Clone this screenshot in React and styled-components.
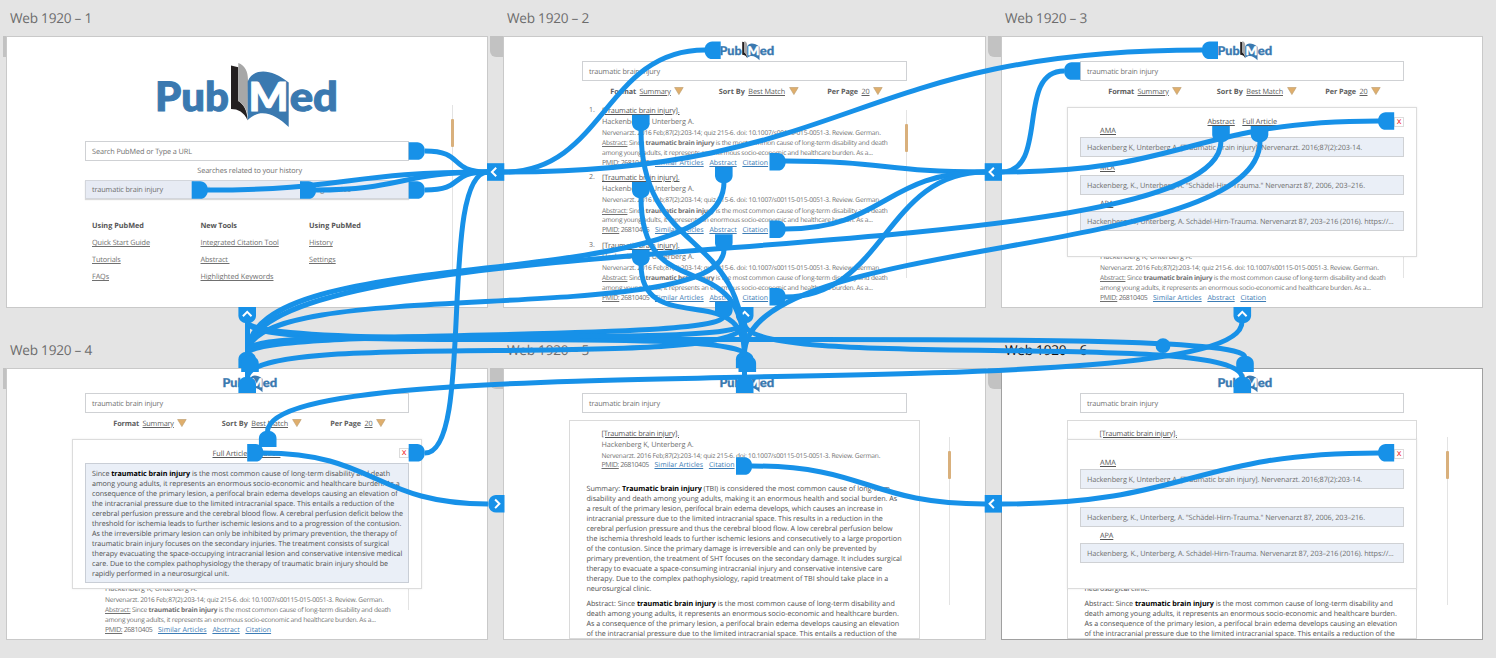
import React, { useLayoutEffect, useRef, useState } from "react";
import styled, { createGlobalStyle, css } from "styled-components";

const BLUE = "#1791e8";

const GlobalStyle = createGlobalStyle`
  * { box-sizing: border-box; }
  body {
    margin: 0;
    background: #e4e4e4;
    font-family: "Open Sans", "Noto Sans", sans-serif;
    text-rendering: geometricPrecision;
    overflow: hidden;
  }
`;

const Canvas = styled.main`
  position: relative;
  width: 1496px;
  height: 658px;
  overflow: hidden;
  background: #e4e4e4;
`;

const Frame = styled.section`
  position: absolute;
  left: ${(p) => p.$x}px;
  top: ${(p) => p.$y}px;
  width: ${(p) => p.$w || 482}px;
`;

const FrameLabel = styled.h2`
  margin: 0 0 0 4px;
  height: 36px;
  padding-top: 8px;
  font-size: 13.6px;
  font-weight: 400;
  line-height: 20px;
  color: ${(p) => (p.$active ? "#111" : "#6c6c6c")};
`;

const Grip = styled.span`
  position: absolute;
  left: -13px;
  top: 36px;
  width: 13px;
  height: 21px;
  border-radius: 0 0 0 6px;
  background: #c2c2c2;
`;

const Artboard = styled.div`
  position: relative;
  height: 272px;
  overflow: hidden;
  background: #fff;
  box-shadow: inset 0 0 0 1px ${(p) => (p.$active ? "#a0a0a0" : "#c9c9c9")};
`;

const Span = styled.span`
  display: inline-block;
  flex: none;
  white-space: pre;
  ${(p) => p.$bold && css`font-weight: 700;`}
  ${(p) => p.$under && css`
    text-decoration: underline;
    text-decoration-thickness: 0.6px;
    text-underline-offset: 1px;
  `}
  ${(p) => p.$color && css`color: ${p.$color};`}
`;

// Tracks a run of text so that it takes exactly the given width.
function Fit({ w, bold, under, color, children }) {
  const ref = useRef(null);
  const [tracking, setTracking] = useState(0);
  useLayoutEffect(() => {
    const el = ref.current;
    el.style.letterSpacing = "0px";
    const natural = el.getBoundingClientRect().width;
    setTracking((w - natural) / el.textContent.length);
  }, [w]);
  return (
    <Span ref={ref} $bold={bold} $under={under} $color={color} style={{ letterSpacing: `${tracking}px` }}>
      {children}
    </Span>
  );
}

const Line = styled.div`
  display: flex;
  align-items: center;
  height: ${(p) => p.$h}px;
  line-height: ${(p) => p.$h}px;
  font-size: ${(p) => p.$size || 7.3}px;
  color: ${(p) => p.$color || "#707070"};
  gap: ${(p) => p.$gap || 0}px;
`;

const LogoRow = styled.div`
  height: ${(p) => (p.$large ? 105 : 25)}px;
  padding: ${(p) => (p.$large ? "26.5px 0 0 151px" : "5px 0 0 217px")};
  svg { display: block; overflow: visible; }
`;

function Logo({ width }) {
  const word = {
    fontFamily: "Lato, sans-serif",
    fontWeight: 900,
    lengthAdjust: "spacingAndGlyphs",
  };
  return (
    <svg width={width} height={(width * 64) / 180} viewBox="0 0 180 64">
      <path d="M74 2.5 L81.3 4.2 L81.3 38 C86 41 90 46 90.7 57.5 C87 49 81 46 74 46 Z" fill="#231f20" />
      <path d="M81.3 0 C88 2.5 91 8 91 17.5 L90.7 52 C89 45 86 41 81.3 38 Z" fill="#a7a7a7" />
      <path d="M90.7 18.5 C96 5 114 5 131.7 19.5 L131.7 64 C119 52 104 44 90.7 57 Z" fill="#3a79b0" />
      <text {...word} x="-2" y="48" fontSize="40.5" textLength="74" fill="#3a79b0" stroke="#3a79b0" strokeWidth="1">Pub</text>
      <text {...word} x="91.5" y="48" fontSize="40" textLength="40" fill="#fff" stroke="#fff" strokeWidth="1">M</text>
      <text {...word} x="132.7" y="48" fontSize="40.5" textLength="48.4" fill="#3a79b0" stroke="#3a79b0" strokeWidth="1">ed</text>
    </svg>
  );
}

const Field = styled.div`
  display: flex;
  align-items: center;
  width: ${(p) => (p.$wide ? 325 : 324)}px;
  height: 20px;
  margin-left: ${(p) => p.$ml ?? 79}px;
  padding: 1.4px 0 0 6px;
  border: 1px solid #cfd1d4;
  background: ${(p) => (p.$filled ? "#eaeff7" : "#fff")};
  font-size: 7.3px;
  line-height: 10px;
  color: #707070;
`;

const FilterRow = styled.div`
  display: flex;
  height: 20px;
  padding-left: 107.3px;
`;

const Filter = styled.div`
  display: flex;
  align-items: center;
  gap: 3.5px;
  width: 108.5px;
  font-size: 7.3px;
  line-height: 10px;
  color: #606060;
  span { padding-top: 1.4px; }
`;

function Caret() {
  return (
    <svg width="10" height="8" viewBox="0 0 10 8">
      <path d="M0.6 0.5H9.2L4.9 7.6Z" fill="#dfae6c" stroke="#b99a6c" strokeWidth="0.6" />
    </svg>
  );
}

function Filters() {
  return (
    <FilterRow>
      <Filter><Fit w={25.7} bold>Format</Fit><Fit w={31.3} under>Summary</Fit><Caret /></Filter>
      <Filter><Fit w={26} bold>Sort By</Fit><Fit w={36.7} under>Best Match</Fit><Caret /></Filter>
      <Filter><Fit w={30.7} bold>Per Page</Fit><Fit w={8} under>20</Fit><Caret /></Filter>
    </FilterRow>
  );
}

function Header({ wide }) {
  return (
    <>
      <LogoRow><Logo width={54} /></LogoRow>
      <Field $wide={wide}><Fit w={71}>traumatic brain injury</Fit></Field>
    </>
  );
}

const Results = styled.div`
  padding: 4.6px 0 0 86px;
`;

const Result = styled.article`
  display: flex;
  height: 67.5px;
`;

const Rank = styled.div`
  width: 13px;
  font-size: 7px;
  line-height: 10px;
  color: #707070;
`;

const LINK = "#3c7cb5";
const Title = () => <Line $h={10} $color="#555"><Fit w={77.5} under>[Traumatic brain injury].</Fit></Line>;
const Authors = () => <Line $h={12.4}><Fit w={92}>Hackenberg K, Unterberg A.</Fit></Line>;
const Journal = () => (
  <Line $h={10.4} $size={6.6}>
    <Fit w={278.7}>Nervenarzt. 2016 Feb;87(2):203-14; quiz 215-6. doi: 10.1007/s00115-015-0051-3. Review. German.</Fit>
  </Line>
);
const Pmid = () => <Fit w={47.3}><Span $under>PMID:</Span> 26810405</Fit>;

function ResultItem({ rank }) {
  return (
    <Result>
      <Rank>{rank}.</Rank>
      <div>
        <Title />
        <Authors />
        <Journal />
        <Line $h={9.2} $size={6.6}>
          <Fit w={285.7}><Span $under>Abstract:</Span> Since <b>traumatic brain injury</b> is the most common cause of long-term disability and death</Fit>
        </Line>
        <Line $h={9} $size={6.6}>
          <Fit w={270.7}>among young adults, it represents an enormous socio-economic and healthcare burden. As a...</Fit>
        </Line>
        <Line $h={13} $gap={5.7} $size={7}>
          <Pmid />
          <Fit w={48.7} under color={LINK}>Similar Articles</Fit>
          <Fit w={27.3} under color={LINK}>Abstract</Fit>
          <Fit w={25.7} under color={LINK}>Citation</Fit>
        </Line>
      </div>
    </Result>
  );
}

function ResultList() {
  return (
    <Results>
      <ResultItem rank={1} />
      <ResultItem rank={2} />
      <ResultItem rank={3} />
    </Results>
  );
}

const Track = styled.div`
  position: absolute;
  left: ${(p) => p.$x}px;
  top: ${(p) => p.$y}px;
  width: 3px;
  height: 168px;
  padding-top: 14px;
  background: linear-gradient(90deg, transparent 1px, #e3e3e3 1px, #e3e3e3 2px, transparent 2px);
`;

const Thumb = styled.div`
  width: 3px;
  height: 28px;
  border-radius: 1px;
  background: #d9b07c;
`;

const Scrollbar = ({ x, y }) => <Track $x={x} $y={y}><Thumb /></Track>;

const Modal = styled.div`
  position: absolute;
  left: 66px;
  top: ${(p) => p.$top}px;
  width: 350px;
  height: 150px;
  border: 1px solid #dcdcdc;
  box-shadow: 0 0 2px rgba(0, 0, 0, 0.08);
  background: #fff;
`;

const CloseButton = styled.span`
  position: absolute;
  right: 12px;
  top: 8.5px;
  width: 10px;
  height: 10px;
  border: 1px solid #dcdcdc;
  font-size: 9px;
  line-height: 6px;
  text-align: center;
  color: #f01820;
`;

const ModalNav = styled.div`
  height: 18px;
  padding: ${(p) => p.$pad};
`;

const Heading = styled.div`
  height: ${(p) => p.$h}px;
  padding: ${(p) => p.$pt}px 0 0 32px;
`;

const StyleName = ({ h, pt, w, children }) => (
  <Heading $h={h} $pt={pt}>
    {children && <Line $h={10} $color="#555"><Fit w={w} under>{children}</Fit></Line>}
  </Heading>
);

function CitationModal({ top, nav, mla, apaPt }) {
  return (
    <Modal $top={top}>
      <CloseButton>x</CloseButton>
      <ModalNav $pad="8.6px 0 0 139.5px">
        {nav && (
          <Line $h={10} $gap={7.5} $color="#555">
            <Fit w={27.3} under>Abstract</Fit>
            <Fit w={34.7} under>Full Article</Fit>
          </Line>
        )}
      </ModalNav>
      <StyleName h={11} pt={0} w={16}>AMA</StyleName>
      <Field $filled $ml={12}><Fit w={275}>Hackenberg K, Unterberg A. [Traumatic brain injury]. Nervenarzt. 2016;87(2):203-14.</Fit></Field>
      <StyleName h={18} pt={5.6} w={15}>{mla}</StyleName>
      <Field $filled $ml={12}><Fit w={278}>Hackenberg, K., Unterberg, A. "Schädel-Hirn-Trauma." Nervenarzt 87, 2006, 203–216.</Fit></Field>
      <StyleName h={16} pt={apaPt} w={13.3}>APA</StyleName>
      <Field $filled $ml={12}><Fit w={306.7}>Hackenberg, K., Unterberg, A. Schädel-Hirn-Trauma. Nervenarzt 87, 203–216 (2016). https://...</Fit></Field>
    </Modal>
  );
}

const AbstractBox = styled.div`
  width: 324px;
  height: 120px;
  margin: 5.4px 0 0 12px;
  padding: 5.1px 0 0 6px;
  border: 1px solid #c9ced6;
  background: #eaeff7;
  b { color: #000; }
`;

const Paragraph = styled.div`
  margin-bottom: ${(p) => p.$mb || 0}px;
  b { color: #000; }
`;

const Lines = ({ rows }) =>
  rows.map(([w, text], i) => (
    <Line key={i} $h={10} $size={7.2} $color="#505050"><Fit w={w}>{text}</Fit></Line>
  ));

const TBI = <b>traumatic brain injury</b>;

const ABSTRACT = [
  [298, <>Since {TBI} is the most common cause of long-term disability and death</>],
  [307.7, "among young adults, it represents an enormous socio-economic and healthcare burden. As a"],
  [305.7, "consequence of the primary lesion, a perifocal brain edema develops causing an elevation of"],
  [302.3, "the intracranial pressure due to the limited intracranial space. This entails a reduction of the"],
  [311, "cerebral perfusion pressure and the cerebral blood flow. A cerebral perfusion deficit below the"],
  [309.3, "threshold for ischemia leads to further ischemic lesions and to a progression of the contusion."],
  [305, "As the irreversible primary lesion can only be inhibited by primary prevention, the therapy of"],
  [297, "traumatic brain injury focuses on the secondary injuries. The treatment consists of surgical"],
  [310.3, "therapy evacuating the space-occupying intracranial lesion and conservative intensive medical"],
  [296, "care. Due to the complex pathophysiology the therapy of traumatic brain injury should be"],
  [137, "rapidly performed in a neurosurgical unit."],
];

const SUMMARY = [
  [303.3, <>Summary: <b>Traumatic brain injury</b> (TBI) is considered the most common cause of long-term</>],
  [310.7, "disability and death among young adults, making it an enormous health and social burden. As"],
  [296, "a result of the primary lesion, perifocal brain edema develops, which causes an increase in"],
  [296.3, "intracranial pressure due to the limited intracranial space. This results in a reduction in the"],
  [306, "cerebral perfusion pressure and thus the cerebral blood flow. A low cerebral perfusion below"],
  [315, "the ischemia threshold leads to further ischemic lesions and consecutively to a large proportion"],
  [289.7, "of the contusion. Since the primary damage is irreversible and can only be prevented by"],
  [315.3, "primary prevention, the treatment of SHT focuses on the secondary damage. It includes surgical"],
  [295.7, "therapy to evacuate a space-consuming intracranial injury and conservative intensive care"],
  [301.7, "therapy. Due to the complex pathophysiology, rapid treatment of TBI should take place in a"],
  [64.7, "neurosurgical clinic."],
];

const ARTICLE_ABSTRACT = [
  [308.3, <>Abstract: Since {TBI} is the most common cause of long-term disability and</>],
  [312.3, "death among young adults, it represents an enormous socio-economic and healthcare burden."],
  [312.7, "As a consequence of the primary lesion, a perifocal brain edema develops causing an elevation"],
  [310.3, "of the intracranial pressure due to the limited intracranial space. This entails a reduction of the"],
];

const ArticlePanel = styled.div`
  width: ${(p) => (p.$wide ? 351 : 350)}px;
  height: 218.5px;
  margin: 7px 0 0 66px;
  padding: 7.5px 0 0 16.5px;
  border: 1px solid #dadada;
  overflow: hidden;
`;

const ArticleHead = styled.div`
  height: 55px;
  padding-left: 15px;
`;

function Article({ wide }) {
  return (
    <ArticlePanel $wide={wide}>
      <ArticleHead>
        <Title />
        <Authors />
        <Journal />
        <Line $h={10.6} $gap={5.7} $size={7}>
          <Pmid />
          <Fit w={48.7} under color={LINK}>Similar Articles</Fit>
          <Fit w={25.7} under color={LINK}>Citation</Fit>
        </Line>
      </ArticleHead>
      <Paragraph $mb={5}><Lines rows={SUMMARY} /></Paragraph>
      <Paragraph><Lines rows={ARTICLE_ABSTRACT} /></Paragraph>
    </ArticlePanel>
  );
}

const Caption = styled.div`
  height: 19px;
  padding: 4.7px 0 0 191.3px;
`;

const HistoryRow = styled.div`
  display: flex;
  width: 324px;
  height: 19px;
  margin-left: 79px;
  box-shadow: 0 1px 1px rgba(0, 0, 0, 0.15);
`;

const HistoryCell = styled.div`
  display: flex;
  align-items: center;
  flex: 1;
  padding: 1.6px 0 0 6px;
  border: 1px solid #d3d6dc;
  background: #e7ebf4;
  font-size: 7.3px;
  line-height: 10px;
  color: #707070;
`;

const LinkColumns = styled.nav`
  display: grid;
  grid-template-columns: 108.5px 108.5px 108px;
  padding: 19.4px 0 0 86px;
`;

const LinkColumn = ({ title, links }) => (
  <div>
    <Line $h={17} $color="#555"><Fit w={title[1]} bold>{title[0]}</Fit></Line>
    {links.map(([text, w]) => (
      <Line $h={17} key={text}><Fit w={w} under>{text}</Fit></Line>
    ))}
  </div>
);

function HomeBoard() {
  return (
    <>
      <LogoRow $large><Logo width={180} /></LogoRow>
      <Field><Fit w={100}>Search PubMed or Type a URL</Fit></Field>
      <Caption><Line $h={10}><Fit w={104.7}>Searches related to your history</Fit></Line></Caption>
      <HistoryRow>
        <HistoryCell><Fit w={71}>traumatic brain injury</Fit></HistoryCell>
        <HistoryCell><Fit w={28}>Seizures</Fit></HistoryCell>
        <HistoryCell><Fit w={43}>Diagnostics</Fit></HistoryCell>
      </HistoryRow>
      <LinkColumns>
        <LinkColumn title={["Using PubMed", 52]} links={[["Quick Start Guide", 58], ["Tutorials", 28.7], ["FAQs", 17]]} />
        <LinkColumn title={["New Tools", 36.3]} links={[["Integrated Citation Tool", 78.3], ["Abstract ", 29], ["Highlighted Keywords", 73]]} />
        <LinkColumn title={["Using PubMed", 52]} links={[["History", 23.7], ["Settings", 26.7]]} />
      </LinkColumns>
      <Scrollbar x={445} y={69} />
    </>
  );
}

function AbstractModal() {
  return (
    <Modal $top={70.5}>
      <CloseButton>x</CloseButton>
      <ModalNav $pad="9px 0 0 139.5px">
        <Line $h={10} $gap={7.5} $color="#555">
          <Fit w={34.7} under>Full Article</Fit>
          <Fit w={25.7} under>Citation</Fit>
        </Line>
      </ModalNav>
      <AbstractBox><Lines rows={ABSTRACT} /></AbstractBox>
    </Modal>
  );
}

const Wires = styled.svg`
  position: absolute;
  inset: 0;
  width: 1496px;
  height: 658px;
  pointer-events: none;
`;

// Horizontal wires leave and arrive level; vertical ones leave and arrive upright.
const hWire = ([x1, y1, x2, y2, pull = 0.5]) => {
  const d = (x2 - x1) * pull;
  return `M${x1} ${y1} C${x1 + d} ${y1} ${x2 - d} ${y2} ${x2} ${y2}`;
};
const vWire = ([x1, y1, x2, y2, extra = 0]) => {
  const d = (y2 - y1) / 2 + Math.sign(y2 - y1) * extra;
  return `M${x1} ${y1} C${x1} ${y1 + d} ${x2} ${y2 - d} ${x2} ${y2}`;
};

const H_WIRES = [
  [425, 151, 488, 172, 0.64],
  [425, 190, 488, 172, 0.66],
  [316, 190, 488, 172],
  [207, 190, 488, 172],
  [425, 453, 488, 172, 0.8],
  [504, 172, 705, 50],
  [504, 172, 1202, 50],
  [1001, 172, 1064, 71, 0.78],
  [1001, 172, 1379, 121],
  [785, 161, 985, 172],
  [785, 229, 985, 172],
  [785, 297, 985, 172],
  [263, 453, 488, 504],
  [752, 466, 985, 504],
  [1001, 504, 1379, 453],
];

const V_WIRES = [
  [1260, 141, 744.5, 354, 14],
  [1221, 141, 247.5, 354, 30],
  [724, 182, 247.5, 354, 31],
  [724, 249, 247.5, 354, 28],
  [724, 316, 247.5, 354, 8],
  [641, 130, 744.5, 354, 15],
  [641, 197, 744.5, 354, 36],
  [641, 264, 744.5, 354, 30],
  [247.5, 378, 744.5, 323, 24],
  [1242, 378, 744.5, 323, 22],
  [744.5, 378, 744.5, 323],
  [247.5, 378, 247.5, 323],
  [747.5, 357, 247.5, 322, 17],
  [1245, 357, 247.5, 322, 19],
  [247.5, 350, 744.5, 323, 14],
  [1242, 322, 267.5, 432, 36],
];

const TURN = { right: 0, down: 90, left: 180, up: 270 };

// A handle is anchored at the middle of its flat side.
const Handle = ({ x, y, dir }) => (
  <path
    transform={`translate(${x} ${y}) rotate(${TURN[dir]})`}
    d="M0 -8.8H8.5C13 -8.8 16.2 -5.2 16.2 0S13 8.8 8.5 8.8H0Z"
    fill={BLUE}
  />
);

const HANDLES = [
  ["right", 408.7, 151], ["right", 191.7, 190], ["right", 300, 190], ["right", 408.7, 190],
  ["right", 769.5, 161.8], ["right", 769.5, 229.3], ["right", 769.5, 296.8],
  ["right", 408.7, 452.8], ["right", 247.2, 452.8], ["right", 736, 466],
  ["left", 720.7, 50.2], ["left", 1218, 50.2], ["left", 1080.2, 71], ["left", 1394.2, 121], ["left", 1394.2, 452.8],
  ["down", 640.8, 114.7], ["down", 640.8, 182], ["down", 640.8, 249.5],
  ["down", 723.8, 167], ["down", 723.8, 234.3], ["down", 723.8, 301.7],
  ["down", 1221, 126], ["down", 1259.5, 126],
  ["up", 267.7, 447], ["up", 247.2, 393], ["up", 744.7, 393], ["up", 1242.3, 393],
  ["up", 247.2, 368], ["up", 250, 372], ["up", 744.7, 368], ["up", 747.3, 372], ["up", 1245, 372],
];

const Chevron = ({ x, y, turn }) => (
  <path
    transform={`translate(${x} ${y}) rotate(${turn})`}
    d="M-4.3 2.2L0 -2.1L4.3 2.2"
    fill="none" stroke="#fff" strokeWidth="2"
  />
);

function Prototype() {
  return (
    <Wires viewBox="0 0 1496 658">
      {[247.2, 744.7, 1242.3].map((x) => (
        <g key={x}><Handle x={x} y={307} dir="down" /><Chevron x={x} y={314} turn={0} /></g>
      ))}
      <g fill="none" stroke={BLUE} strokeWidth="5">
        {H_WIRES.map((w) => <path key={w.join()} d={hWire(w)} />)}
        {V_WIRES.map((w) => <path key={w.join()} d={vWire(w)} />)}
      </g>
      <circle cx="1163" cy="345.7" r="7.4" fill={BLUE} />
      {HANDLES.map(([dir, x, y]) => <Handle key={`${dir}${x},${y}`} dir={dir} x={x} y={y} />)}
      {[[487, 172], [984.7, 172], [984.7, 503.8]].map(([x, y]) => (
        <g key={`${x},${y}`}>
          <rect x={x} y={y - 8.8} width="17.3" height="17.6" fill={BLUE} />
          <Chevron x={x + 7} y={y} turn={-90} />
        </g>
      ))}
      <Handle dir="left" x={504.5} y={503.8} />
      <Chevron x={497.3} y={503.8} turn={90} />
    </Wires>
  );
}

function Board({ n, x, y, w, active, children }) {
  return (
    <Frame $x={x} $y={y} $w={w}>
      <Grip />
      <FrameLabel $active={active}><Fit w={82}>{`Web 1920 – ${n}`}</Fit></FrameLabel>
      <Artboard $active={active}>{children}</Artboard>
    </Frame>
  );
}

const EdgeCover = styled.div`
  position: absolute;
  left: 0;
  top: 0;
  width: 3px;
  height: 658px;
  background: #e4e4e4;
`;

export default function App() {
  return (
    <>
      <GlobalStyle />
      <Canvas>
        <Board n={1} x={6} y={0}><HomeBoard /></Board>
        <Board n={2} x={503} y={0} w={483}>
          <Header wide /><Filters /><ResultList /><Scrollbar x={402} y={74} />
        </Board>
        <Board n={3} x={1001} y={0}>
          <Header /><Filters /><ResultList /><Scrollbar x={401} y={74} />
          <CitationModal top={71} nav mla="MLA" apaPt={3.5} />
        </Board>
        <Board n={4} x={6} y={332}>
          <Header /><Filters /><ResultList /><Scrollbar x={401} y={74} />
          <AbstractModal />
        </Board>
        <Board n={5} x={503} y={332} w={483}>
          <Header wide /><Article wide /><Scrollbar x={445} y={69} />
        </Board>
        <Board n={6} x={1001} y={332} active>
          <Header /><Article /><Scrollbar x={445} y={69} />
          <CitationModal top={71} apaPt={3.8} />
        </Board>
        <EdgeCover />
        <Prototype />
      </Canvas>
    </>
  );
}
